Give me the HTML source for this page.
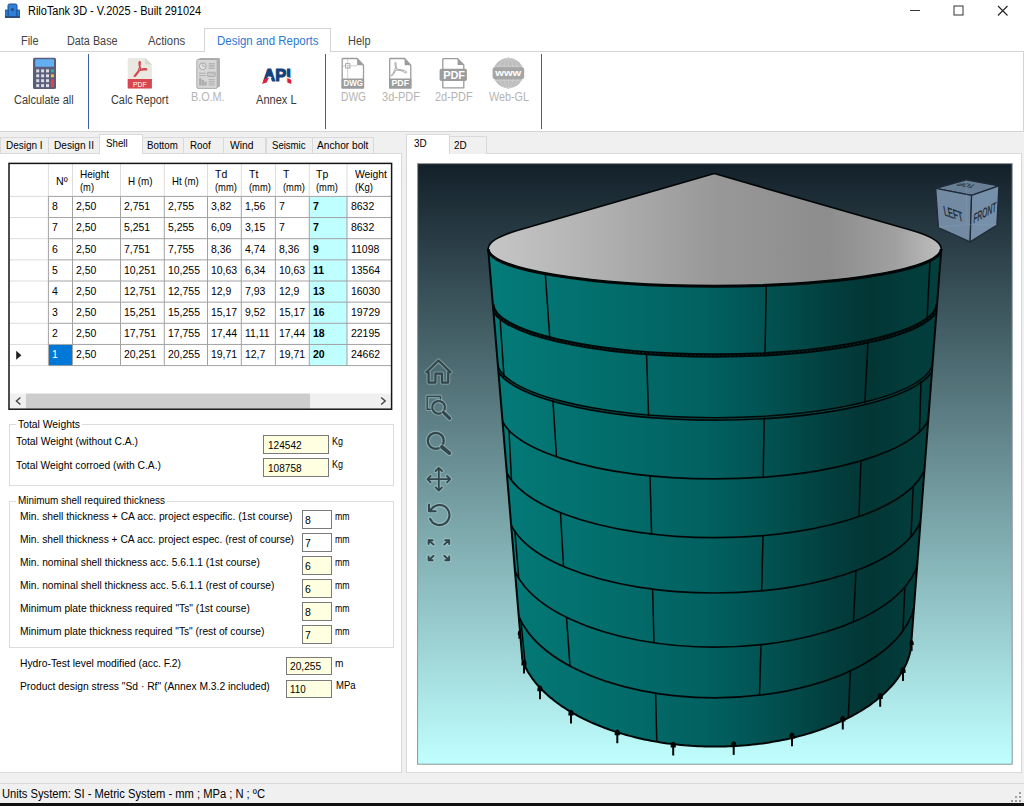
<!DOCTYPE html>
<html lang="en"><head><meta charset="utf-8"><title>RiloTank 3D - V.2025 - Built 291024</title>
<style>
html,body{margin:0;padding:0}
body{width:1024px;height:806px;position:relative;overflow:hidden;background:#f0f0f0;font-family:"Liberation Sans",sans-serif;}
.a{position:absolute;box-sizing:border-box}
.t{position:absolute;white-space:nowrap;transform-origin:0 0}
svg{position:absolute;overflow:visible}
</style></head><body>

<div class="a" style="left:0px;top:0px;width:1024px;height:51px;background:#fff"></div>
<svg style="left:5px;top:3px" width="15" height="15" viewBox="0 0 15 15">
<rect x="3" y="1" width="9" height="13" rx="1.5" fill="#2f7fd6" stroke="#1c4f8f" stroke-width="1"/>
<rect x="0.5" y="7" width="2.5" height="7" fill="#2f7fd6" stroke="#1c4f8f" stroke-width="0.8"/>
<rect x="12" y="7" width="2.5" height="7" fill="#2f7fd6" stroke="#1c4f8f" stroke-width="0.8"/>
<rect x="6.3" y="5.5" width="2.2" height="2.2" fill="#123a6b"/>
<rect x="0" y="13.6" width="15" height="1.2" fill="#1c3557"/>
</svg>
<div class="t" style="left:28.3px;top:4.44px;font-size:12px;line-height:14px;color:#000;transform:scaleX(0.9131);">RiloTank 3D - V.2025 - Built 291024</div>
<svg style="left:900px;top:0" width="124" height="22" viewBox="900 0 124 22">
<path d="M910 10.5H920" stroke="#333" stroke-width="1" fill="none"/>
<rect x="954" y="6" width="9" height="9" stroke="#333" stroke-width="1" fill="none"/>
<path d="M998 6L1007.5 15.5M1007.5 6L998 15.5" stroke="#222" stroke-width="1.1" fill="none"/>
</svg>
<div class="t" style="left:20.5px;top:33.74px;font-size:12px;line-height:14px;color:#444;transform:scaleX(0.9047);">File</div>
<div class="t" style="left:67.4px;top:33.74px;font-size:12px;line-height:14px;color:#444;transform:scaleX(0.9028);">Data Base</div>
<div class="t" style="left:148.4px;top:33.74px;font-size:12px;line-height:14px;color:#444;transform:scaleX(0.9426);">Actions</div>
<div class="t" style="left:347.5px;top:33.74px;font-size:12px;line-height:14px;color:#444;transform:scaleX(0.9114);">Help</div>
<div class="a" style="left:0px;top:51px;width:1024px;height:81px;background:#fff;border:1px solid #d4d4d4;border-left:none"></div>
<div class="a" style="left:204px;top:28px;width:127px;height:24px;background:#fff;border:1px solid #d4d4d4;border-bottom:none"></div>
<div class="t" style="left:216.6px;top:33.74px;font-size:12px;line-height:14px;color:#2b79d2;transform:scaleX(0.9560);">Design and Reports</div>
<div class="a" style="left:88px;top:54px;width:1px;height:75px;background:#3a5fa8"></div>
<div class="a" style="left:325px;top:54px;width:1px;height:75px;background:#3a5fa8"></div>
<div class="a" style="left:541px;top:54px;width:1px;height:75px;background:#3a5fa8"></div>
<div class="t" style="left:13.8px;top:92.84px;font-size:12px;line-height:14px;color:#3a3a3a;transform:scaleX(0.9124);">Calculate all</div>
<div class="t" style="left:111.2px;top:92.84px;font-size:12px;line-height:14px;color:#3a3a3a;transform:scaleX(0.9075);">Calc Report</div>
<div class="t" style="left:191.4px;top:89.84px;font-size:12px;line-height:14px;color:#b4b4b4;transform:scaleX(0.8997);">B.O.M.</div>
<div class="t" style="left:255.8px;top:92.84px;font-size:12px;line-height:14px;color:#3a3a3a;transform:scaleX(0.9217);">Annex L</div>
<div class="t" style="left:341.0px;top:89.84px;font-size:12px;line-height:14px;color:#b4b4b4;transform:scaleX(0.8524);">DWG</div>
<div class="t" style="left:382.0px;top:89.84px;font-size:12px;line-height:14px;color:#b4b4b4;transform:scaleX(0.9191);">3d-PDF</div>
<div class="t" style="left:435.3px;top:89.84px;font-size:12px;line-height:14px;color:#b4b4b4;transform:scaleX(0.9119);">2d-PDF</div>
<div class="t" style="left:488.7px;top:89.84px;font-size:12px;line-height:14px;color:#b4b4b4;transform:scaleX(0.8973);">Web-GL</div>
<svg style="left:0;top:0" width="1024" height="135" viewBox="0 0 1024 135"><rect x="33" y="57.7" width="23" height="31.3" rx="1.6" fill="#5a5e7b"/><rect x="35.2" y="59.3" width="18.8" height="7.4" rx="0.6" fill="#62b0f2"/><rect x="36.2" y="69.4" width="3" height="3" fill="#dcdce2"/><rect x="41.1" y="69.4" width="3" height="3" fill="#dcdce2"/><rect x="46.0" y="69.4" width="3" height="3" fill="#dcdce2"/><rect x="36.2" y="74.3" width="3" height="3" fill="#dcdce2"/><rect x="41.1" y="74.3" width="3" height="3" fill="#dcdce2"/><rect x="46.0" y="74.3" width="3" height="3" fill="#dcdce2"/><rect x="36.2" y="79.2" width="3" height="3" fill="#dcdce2"/><rect x="41.1" y="79.2" width="3" height="3" fill="#dcdce2"/><rect x="46.0" y="79.2" width="3" height="3" fill="#dcdce2"/><rect x="36.2" y="84.1" width="3" height="3" fill="#dcdce2"/><rect x="41.1" y="84.1" width="3" height="3" fill="#dcdce2"/><rect x="46.0" y="84.1" width="3" height="3" fill="#dcdce2"/><rect x="50.9" y="69.4" width="3" height="3" fill="#2bb5a0"/><rect x="50.9" y="74.3" width="3" height="3" fill="#f3c23c"/><rect x="50.9" y="79.2" width="3" height="7.9" fill="#e2434f"/><path d="M129 58.1H145.2L151.9 64.6V88.6H127.7V59.4Q127.7 58.1 129 58.1Z" fill="#e9e9e1"/><path d="M145.2 58.1L151.9 64.6H146.4Q145.2 64.6 145.2 63.4Z" fill="#d7d7cc"/><path d="M127.7 78.9H151.9V87.4Q151.9 88.6 150.7 88.6H128.9Q127.7 88.6 127.7 87.4Z" fill="#d8474f"/><path d="M139.6 61.6C138.6 61.8 139 64.8 139.7 67.2C139 70 136.6 73.8 134.6 75.4C133.6 76.2 134.4 76.9 135.4 76C137 74.4 138.4 72.2 139.3 70.6C141.2 70 143.6 69.6 145.6 69.9C147 70.1 147.2 69 145.9 68.7C144.2 68.4 142.2 68.7 140.6 69.2C140 67.6 139.6 65.8 140.2 63.2C140.5 62 140.2 61.5 139.6 61.6Z" fill="none" stroke="#d04850" stroke-width="1.3" stroke-linejoin="round"/><text x="139.8" y="86.5" font-family="Liberation Sans, sans-serif" font-size="7.2" fill="#fff" text-anchor="middle" textLength="13.6" lengthAdjust="spacingAndGlyphs">PDF</text><rect x="199.5" y="58.1" width="20.4" height="29" rx="1" fill="#a9a9a9"/><rect x="198" y="58.8" width="20.4" height="29.2" rx="1" fill="#b9b9b9"/><rect x="196.8" y="59.4" width="20.4" height="29" rx="1.2" fill="#d6d6d6" stroke="#a4a4a4" stroke-width="0.9"/><circle cx="202.8" cy="66.3" r="3.4" fill="#e4e4e4" stroke="#a4a4a4" stroke-width="0.9"/><path d="M202.8 63.4V66.3H205.6" fill="none" stroke="#a4a4a4" stroke-width="0.8"/><path d="M208.6 63.6H214.8M208.6 65.2H214.8M208.6 66.8H214.8M208.6 68.4H214.8" stroke="#a4a4a4" stroke-width="0.8"/><path d="M199 73.2H206M199 75.6H206" stroke="#a4a4a4" stroke-width="0.8"/><rect x="207.6" y="72.3" width="7.6" height="4.3" rx="0.6" fill="#c6c6c6" stroke="#a4a4a4" stroke-width="0.8"/><path d="M199.6 85.6V78.4H201V85.6M202.2 85.6V80.2H203.6V85.6M204.8 85.6V82H206.2V85.6" fill="#b4b4b4" stroke="#a4a4a4" stroke-width="0.7"/><path d="M208.6 79.6H214.8M208.6 81.4H214.8M208.6 83.2H214.8M208.6 85H214.8" stroke="#a4a4a4" stroke-width="0.8"/><text x="263.2" y="81.2" font-family="Liberation Sans, sans-serif" font-weight="bold" font-size="17.0" fill="#16417c" stroke="#16417c" stroke-width="1.1" stroke-linejoin="round" textLength="27.6" lengthAdjust="spacingAndGlyphs">API</text><path d="M267.6 76.4L269.6 71.2L271.6 76.4Z" fill="#16417c"/><path d="M260.5 86L268.6 76.3L271.6 77L268.4 86Z" fill="#fff"/><path d="M264.4 78.9L269 77.7L266.6 82.4L261.8 84Z" fill="#e01e3c"/><path d="M286.6 76.6L292 78.6V86H286.6Z" fill="#fff"/><path d="M287.3 77.9L291.2 79.7V84L287.3 82.4Z" fill="#e01e3c"/><path d="M343 58.5H357.1L363.5 65.2V87.9H342.2V59.3Q342.2 58.5 343 58.5Z" fill="#fff" stroke="#9c9c9c" stroke-width="1.3" stroke-linejoin="round"/><path d="M357.1 58.5L363.5 65.2H357.1Z" fill="#9c9c9c"/><path d="M347.7 59V78.6M343 65.9H357" stroke="#cfcfcf" stroke-width="1"/><rect x="345.6" y="63.7" width="4.3" height="4.3" fill="#fff" stroke="#9c9c9c" stroke-width="0.9"/><rect x="347.1" y="65.2" width="1.3" height="1.3" fill="#9c9c9c"/><rect x="341.6" y="78.6" width="22.5" height="9.9" rx="0.8" fill="#9c9c9c"/><text x="353.2" y="86.4" font-family="Liberation Sans, sans-serif" font-weight="bold" font-size="8.2" fill="#fff" text-anchor="middle" textLength="19.4" lengthAdjust="spacingAndGlyphs">DWG</text><path d="M390.4 58.5H404.6L410.8 65.2V87.9H389.7V59.3Q389.7 58.5 390.4 58.5Z" fill="#fff" stroke="#9c9c9c" stroke-width="1.3" stroke-linejoin="round"/><path d="M404.6 58.5L410.8 65.2H404.6Z" fill="#9c9c9c"/><path d="M395.4 62.4C394.6 62.6 395 65 395.6 67C394.8 69.8 393.2 73.4 391.6 75C390.8 75.8 391.6 76.4 392.4 75.6C393.8 74.2 394.8 72 395.6 70.4C397.6 69.8 402 70.2 404.8 72.6C406.2 73.6 407.6 72.6 406.2 71.4C404.4 70.2 399.6 69.4 396.8 69.2C396.2 67.6 395.8 65.8 396.2 63.8C396.4 62.8 396 62.3 395.4 62.4Z" fill="none" stroke="#9c9c9c" stroke-width="0.9" stroke-linejoin="round"/><rect x="389.1" y="78.6" width="22.3" height="9.9" rx="0.8" fill="#9c9c9c"/><text x="400.3" y="86.4" font-family="Liberation Sans, sans-serif" font-weight="bold" font-size="8.2" fill="#fff" text-anchor="middle" textLength="17.6" lengthAdjust="spacingAndGlyphs">PDF</text><path d="M443.6 58.7H457.6L463.8 65V87.8H442.8V59.5Q442.8 58.7 443.6 58.7Z" fill="#fff" stroke="#9c9c9c" stroke-width="1.3" stroke-linejoin="round"/><path d="M457.6 58.7L463.8 65H457.6Z" fill="#9c9c9c"/><rect x="439.6" y="68.8" width="27.3" height="12.1" rx="1.6" fill="#9c9c9c"/><text x="454.1" y="79.4" font-family="Liberation Sans, sans-serif" font-weight="bold" font-size="11.6" fill="#fff" text-anchor="middle" textLength="21.8" lengthAdjust="spacingAndGlyphs">PDF</text><circle cx="508.4" cy="73.1" r="15.2" fill="#bdbdbd"/><g fill="none" stroke="#cfcfcf" stroke-width="0.8"><ellipse cx="508.4" cy="73.1" rx="5" ry="15.2"/><ellipse cx="508.4" cy="73.1" rx="10.4" ry="15.2"/><path d="M508.4 57.9V88.3M494.6 66H522.2M494.6 80.4H522.2"/></g><rect x="492.6" y="67.2" width="31.6" height="12" rx="2.4" fill="#a6a6a6"/><text x="508.3" y="75.6" font-family="Liberation Sans, sans-serif" font-weight="bold" font-size="9.4" fill="#fff" text-anchor="middle" textLength="26" lengthAdjust="spacingAndGlyphs">www</text></svg>
<div class="a" style="left:0px;top:153px;width:402px;height:620px;background:#fff;border:1px solid #d9d9d9;border-left:none"></div>
<div class="a" style="left:0px;top:136.5px;width:48.5px;height:17.5px;background:#f0f0f0;border:1px solid #d9d9d9;border-bottom:none"></div>
<div class="t" style="left:5.5px;top:138.69px;font-size:11px;line-height:13px;color:#000;transform:scaleX(0.9044);">Design I</div>
<div class="a" style="left:47.5px;top:136.5px;width:52.5px;height:17.5px;background:#f0f0f0;border:1px solid #d9d9d9;border-bottom:none"></div>
<div class="t" style="left:54.3px;top:138.69px;font-size:11px;line-height:13px;color:#000;transform:scaleX(0.9212);">Design II</div>
<div class="a" style="left:142px;top:136.5px;width:42.19999999999999px;height:17.5px;background:#f0f0f0;border:1px solid #d9d9d9;border-bottom:none"></div>
<div class="t" style="left:146.9px;top:138.69px;font-size:11px;line-height:13px;color:#000;transform:scaleX(0.8835);">Bottom</div>
<div class="a" style="left:183.2px;top:136.5px;width:41.20000000000002px;height:17.5px;background:#f0f0f0;border:1px solid #d9d9d9;border-bottom:none"></div>
<div class="t" style="left:190.2px;top:138.69px;font-size:11px;line-height:13px;color:#000;transform:scaleX(0.8946);">Roof</div>
<div class="a" style="left:223.4px;top:136.5px;width:43.099999999999994px;height:17.5px;background:#f0f0f0;border:1px solid #d9d9d9;border-bottom:none"></div>
<div class="t" style="left:230.2px;top:138.69px;font-size:11px;line-height:13px;color:#000;transform:scaleX(0.9416);">Wind</div>
<div class="a" style="left:265.5px;top:136.5px;width:47.0px;height:17.5px;background:#f0f0f0;border:1px solid #d9d9d9;border-bottom:none"></div>
<div class="t" style="left:271.5px;top:138.69px;font-size:11px;line-height:13px;color:#000;transform:scaleX(0.8698);">Seismic</div>
<div class="a" style="left:311.5px;top:136.5px;width:62.69999999999999px;height:17.5px;background:#f0f0f0;border:1px solid #d9d9d9;border-bottom:none"></div>
<div class="t" style="left:317.0px;top:138.69px;font-size:11px;line-height:13px;color:#000;transform:scaleX(0.9235);">Anchor bolt</div>
<div class="a" style="left:0px;top:153px;width:402px;height:1px;background:#d9d9d9"></div>
<div class="a" style="left:98.6px;top:134.3px;width:44px;height:20px;background:#fff;border:1px solid #d9d9d9;border-bottom:none"></div>
<div class="t" style="left:106.4px;top:136.79px;font-size:11px;line-height:13px;color:#000;transform:scaleX(0.8828);">Shell</div>
<div class="a" style="left:9.5px;top:164px;width:382px;height:245px;background:#fff"></div>
<div class="a" style="left:309.8px;top:196.9px;width:37.2px;height:168.70000000000002px;background:#c0ffff"></div>
<div class="a" style="left:48.9px;top:344.95px;width:23.6px;height:20.65px;background:#0078d7"></div>
<svg style="left:0;top:0" width="410" height="420" viewBox="0 0 410 420"><path d="M48.4 164V196.4" stroke="#dcdcdc" stroke-width="1"/><path d="M72.5 164V196.4" stroke="#dcdcdc" stroke-width="1"/><path d="M120.5 164V196.4" stroke="#dcdcdc" stroke-width="1"/><path d="M164.3 164V196.4" stroke="#dcdcdc" stroke-width="1"/><path d="M207.5 164V196.4" stroke="#dcdcdc" stroke-width="1"/><path d="M241.3 164V196.4" stroke="#dcdcdc" stroke-width="1"/><path d="M275.4 164V196.4" stroke="#dcdcdc" stroke-width="1"/><path d="M309.3 164V196.4" stroke="#dcdcdc" stroke-width="1"/><path d="M347 164V196.4" stroke="#dcdcdc" stroke-width="1"/><path d="M9.5 196.4H48.4" stroke="#dcdcdc" stroke-width="1"/><path d="M48.4 196.4H391" stroke="#a2a2a2" stroke-width="1"/><path d="M48.4 196.4V365.6" stroke="#a2a2a2" stroke-width="1"/><path d="M72.5 196.4V365.6" stroke="#a2a2a2" stroke-width="1"/><path d="M120.5 196.4V365.6" stroke="#a2a2a2" stroke-width="1"/><path d="M164.3 196.4V365.6" stroke="#a2a2a2" stroke-width="1"/><path d="M207.5 196.4V365.6" stroke="#a2a2a2" stroke-width="1"/><path d="M241.3 196.4V365.6" stroke="#a2a2a2" stroke-width="1"/><path d="M275.4 196.4V365.6" stroke="#a2a2a2" stroke-width="1"/><path d="M309.3 196.4V365.6" stroke="#a2a2a2" stroke-width="1"/><path d="M347 196.4V365.6" stroke="#a2a2a2" stroke-width="1"/><path d="M9.5 217.55H48.4" stroke="#dcdcdc" stroke-width="1"/><path d="M48.4 217.55H391" stroke="#a2a2a2" stroke-width="1"/><path d="M9.5 238.70H48.4" stroke="#dcdcdc" stroke-width="1"/><path d="M48.4 238.70H391" stroke="#a2a2a2" stroke-width="1"/><path d="M9.5 259.85H48.4" stroke="#dcdcdc" stroke-width="1"/><path d="M48.4 259.85H391" stroke="#a2a2a2" stroke-width="1"/><path d="M9.5 281.00H48.4" stroke="#dcdcdc" stroke-width="1"/><path d="M48.4 281.00H391" stroke="#a2a2a2" stroke-width="1"/><path d="M9.5 302.15H48.4" stroke="#dcdcdc" stroke-width="1"/><path d="M48.4 302.15H391" stroke="#a2a2a2" stroke-width="1"/><path d="M9.5 323.30H48.4" stroke="#dcdcdc" stroke-width="1"/><path d="M48.4 323.30H391" stroke="#a2a2a2" stroke-width="1"/><path d="M9.5 344.45H48.4" stroke="#dcdcdc" stroke-width="1"/><path d="M48.4 344.45H391" stroke="#a2a2a2" stroke-width="1"/><path d="M9.5 365.60H48.4" stroke="#dcdcdc" stroke-width="1"/><path d="M48.4 365.60H391" stroke="#a2a2a2" stroke-width="1"/><path d="M16.2 350.62499999999994L21.4 355.22499999999997L16.2 359.825Z" fill="#222"/><rect x="9.8" y="393.6" width="381.4" height="15" fill="#f0f0f0"/><rect x="26" y="393.6" width="284" height="15" fill="#cdcdcd"/><path d="M20.4 397.4L16.4 401L20.4 404.6" fill="none" stroke="#444" stroke-width="1.4"/><path d="M381.2 397.4L385.2 401L381.2 404.6" fill="none" stroke="#444" stroke-width="1.4"/><rect x="9" y="163.4" width="382.6" height="245.79999999999998" fill="none" stroke="#151515" stroke-width="1.5"/></svg>
<div class="t" style="left:56.4px;top:174.69px;font-size:11px;line-height:13px;color:#000;transform:scaleX(0.9692);">Nº</div>
<div class="t" style="left:80.0px;top:168.29px;font-size:11px;line-height:13px;color:#000;transform:scaleX(0.9120);">Height</div>
<div class="t" style="left:80.0px;top:180.89px;font-size:11px;line-height:13px;color:#000;transform:scaleX(0.8485);">(m)</div>
<div class="t" style="left:128.0px;top:174.69px;font-size:11px;line-height:13px;color:#000;transform:scaleX(0.8945);">H (m)</div>
<div class="t" style="left:171.6px;top:174.69px;font-size:11px;line-height:13px;color:#000;transform:scaleX(0.8773);">Ht (m)</div>
<div class="t" style="left:215.4px;top:168.29px;font-size:11px;line-height:13px;color:#000;transform:scaleX(0.95);">Td</div>
<div class="t" style="left:215.0px;top:180.89px;font-size:11px;line-height:13px;color:#000;transform:scaleX(0.8497);">(mm)</div>
<div class="t" style="left:249.0px;top:168.29px;font-size:11px;line-height:13px;color:#000;transform:scaleX(0.95);">Tt</div>
<div class="t" style="left:248.6px;top:180.89px;font-size:11px;line-height:13px;color:#000;transform:scaleX(0.8497);">(mm)</div>
<div class="t" style="left:283.0px;top:168.29px;font-size:11px;line-height:13px;color:#000;transform:scaleX(0.95);">T</div>
<div class="t" style="left:282.6px;top:180.89px;font-size:11px;line-height:13px;color:#000;transform:scaleX(0.8497);">(mm)</div>
<div class="t" style="left:316.4px;top:168.29px;font-size:11px;line-height:13px;color:#000;transform:scaleX(0.95);">Tp</div>
<div class="t" style="left:316.0px;top:180.89px;font-size:11px;line-height:13px;color:#000;transform:scaleX(0.8497);">(mm)</div>
<div class="t" style="left:355.0px;top:168.29px;font-size:11px;line-height:13px;color:#000;transform:scaleX(0.9399);">Weight</div>
<div class="t" style="left:355.0px;top:180.89px;font-size:11px;line-height:13px;color:#000;transform:scaleX(0.8662);">(Kg)</div>
<div class="t" style="left:52.3px;top:200.29px;font-size:11px;line-height:13px;color:#000;transform:scaleX(0.95);">8</div>
<div class="t" style="left:75.6px;top:200.29px;font-size:11px;line-height:13px;color:#000;transform:scaleX(0.95);">2,50</div>
<div class="t" style="left:124.3px;top:200.29px;font-size:11px;line-height:13px;color:#000;transform:scaleX(0.95);">2,751</div>
<div class="t" style="left:167.6px;top:200.29px;font-size:11px;line-height:13px;color:#000;transform:scaleX(0.95);">2,755</div>
<div class="t" style="left:211.4px;top:200.29px;font-size:11px;line-height:13px;color:#000;transform:scaleX(0.95);">3,82</div>
<div class="t" style="left:245.4px;top:200.29px;font-size:11px;line-height:13px;color:#000;transform:scaleX(0.95);">1,56</div>
<div class="t" style="left:279.4px;top:200.29px;font-size:11px;line-height:13px;color:#000;transform:scaleX(0.95);">7</div>
<div class="t" style="left:313.2px;top:200.29px;font-size:11px;line-height:13px;color:#000;font-weight:bold;transform:scaleX(0.95);">7</div>
<div class="t" style="left:351.0px;top:200.29px;font-size:11px;line-height:13px;color:#000;transform:scaleX(0.95);">8632</div>
<div class="t" style="left:52.3px;top:221.44px;font-size:11px;line-height:13px;color:#000;transform:scaleX(0.95);">7</div>
<div class="t" style="left:75.6px;top:221.44px;font-size:11px;line-height:13px;color:#000;transform:scaleX(0.95);">2,50</div>
<div class="t" style="left:124.3px;top:221.44px;font-size:11px;line-height:13px;color:#000;transform:scaleX(0.95);">5,251</div>
<div class="t" style="left:167.6px;top:221.44px;font-size:11px;line-height:13px;color:#000;transform:scaleX(0.95);">5,255</div>
<div class="t" style="left:211.4px;top:221.44px;font-size:11px;line-height:13px;color:#000;transform:scaleX(0.95);">6,09</div>
<div class="t" style="left:245.4px;top:221.44px;font-size:11px;line-height:13px;color:#000;transform:scaleX(0.95);">3,15</div>
<div class="t" style="left:279.4px;top:221.44px;font-size:11px;line-height:13px;color:#000;transform:scaleX(0.95);">7</div>
<div class="t" style="left:313.2px;top:221.44px;font-size:11px;line-height:13px;color:#000;font-weight:bold;transform:scaleX(0.95);">7</div>
<div class="t" style="left:351.0px;top:221.44px;font-size:11px;line-height:13px;color:#000;transform:scaleX(0.95);">8632</div>
<div class="t" style="left:52.3px;top:242.59px;font-size:11px;line-height:13px;color:#000;transform:scaleX(0.95);">6</div>
<div class="t" style="left:75.6px;top:242.59px;font-size:11px;line-height:13px;color:#000;transform:scaleX(0.95);">2,50</div>
<div class="t" style="left:124.3px;top:242.59px;font-size:11px;line-height:13px;color:#000;transform:scaleX(0.95);">7,751</div>
<div class="t" style="left:167.6px;top:242.59px;font-size:11px;line-height:13px;color:#000;transform:scaleX(0.95);">7,755</div>
<div class="t" style="left:211.4px;top:242.59px;font-size:11px;line-height:13px;color:#000;transform:scaleX(0.95);">8,36</div>
<div class="t" style="left:245.4px;top:242.59px;font-size:11px;line-height:13px;color:#000;transform:scaleX(0.95);">4,74</div>
<div class="t" style="left:279.4px;top:242.59px;font-size:11px;line-height:13px;color:#000;transform:scaleX(0.95);">8,36</div>
<div class="t" style="left:313.2px;top:242.59px;font-size:11px;line-height:13px;color:#000;font-weight:bold;transform:scaleX(0.95);">9</div>
<div class="t" style="left:351.0px;top:242.59px;font-size:11px;line-height:13px;color:#000;transform:scaleX(0.95);">11098</div>
<div class="t" style="left:52.3px;top:263.74px;font-size:11px;line-height:13px;color:#000;transform:scaleX(0.95);">5</div>
<div class="t" style="left:75.6px;top:263.74px;font-size:11px;line-height:13px;color:#000;transform:scaleX(0.95);">2,50</div>
<div class="t" style="left:124.3px;top:263.74px;font-size:11px;line-height:13px;color:#000;transform:scaleX(0.95);">10,251</div>
<div class="t" style="left:167.6px;top:263.74px;font-size:11px;line-height:13px;color:#000;transform:scaleX(0.95);">10,255</div>
<div class="t" style="left:211.4px;top:263.74px;font-size:11px;line-height:13px;color:#000;transform:scaleX(0.95);">10,63</div>
<div class="t" style="left:245.4px;top:263.74px;font-size:11px;line-height:13px;color:#000;transform:scaleX(0.95);">6,34</div>
<div class="t" style="left:279.4px;top:263.74px;font-size:11px;line-height:13px;color:#000;transform:scaleX(0.95);">10,63</div>
<div class="t" style="left:313.2px;top:263.74px;font-size:11px;line-height:13px;color:#000;font-weight:bold;transform:scaleX(0.95);">11</div>
<div class="t" style="left:351.0px;top:263.74px;font-size:11px;line-height:13px;color:#000;transform:scaleX(0.95);">13564</div>
<div class="t" style="left:52.3px;top:284.89px;font-size:11px;line-height:13px;color:#000;transform:scaleX(0.95);">4</div>
<div class="t" style="left:75.6px;top:284.89px;font-size:11px;line-height:13px;color:#000;transform:scaleX(0.95);">2,50</div>
<div class="t" style="left:124.3px;top:284.89px;font-size:11px;line-height:13px;color:#000;transform:scaleX(0.95);">12,751</div>
<div class="t" style="left:167.6px;top:284.89px;font-size:11px;line-height:13px;color:#000;transform:scaleX(0.95);">12,755</div>
<div class="t" style="left:211.4px;top:284.89px;font-size:11px;line-height:13px;color:#000;transform:scaleX(0.95);">12,9</div>
<div class="t" style="left:245.4px;top:284.89px;font-size:11px;line-height:13px;color:#000;transform:scaleX(0.95);">7,93</div>
<div class="t" style="left:279.4px;top:284.89px;font-size:11px;line-height:13px;color:#000;transform:scaleX(0.95);">12,9</div>
<div class="t" style="left:313.2px;top:284.89px;font-size:11px;line-height:13px;color:#000;font-weight:bold;transform:scaleX(0.95);">13</div>
<div class="t" style="left:351.0px;top:284.89px;font-size:11px;line-height:13px;color:#000;transform:scaleX(0.95);">16030</div>
<div class="t" style="left:52.3px;top:306.04px;font-size:11px;line-height:13px;color:#000;transform:scaleX(0.95);">3</div>
<div class="t" style="left:75.6px;top:306.04px;font-size:11px;line-height:13px;color:#000;transform:scaleX(0.95);">2,50</div>
<div class="t" style="left:124.3px;top:306.04px;font-size:11px;line-height:13px;color:#000;transform:scaleX(0.95);">15,251</div>
<div class="t" style="left:167.6px;top:306.04px;font-size:11px;line-height:13px;color:#000;transform:scaleX(0.95);">15,255</div>
<div class="t" style="left:211.4px;top:306.04px;font-size:11px;line-height:13px;color:#000;transform:scaleX(0.95);">15,17</div>
<div class="t" style="left:245.4px;top:306.04px;font-size:11px;line-height:13px;color:#000;transform:scaleX(0.95);">9,52</div>
<div class="t" style="left:279.4px;top:306.04px;font-size:11px;line-height:13px;color:#000;transform:scaleX(0.95);">15,17</div>
<div class="t" style="left:313.2px;top:306.04px;font-size:11px;line-height:13px;color:#000;font-weight:bold;transform:scaleX(0.95);">16</div>
<div class="t" style="left:351.0px;top:306.04px;font-size:11px;line-height:13px;color:#000;transform:scaleX(0.95);">19729</div>
<div class="t" style="left:52.3px;top:327.19px;font-size:11px;line-height:13px;color:#000;transform:scaleX(0.95);">2</div>
<div class="t" style="left:75.6px;top:327.19px;font-size:11px;line-height:13px;color:#000;transform:scaleX(0.95);">2,50</div>
<div class="t" style="left:124.3px;top:327.19px;font-size:11px;line-height:13px;color:#000;transform:scaleX(0.95);">17,751</div>
<div class="t" style="left:167.6px;top:327.19px;font-size:11px;line-height:13px;color:#000;transform:scaleX(0.95);">17,755</div>
<div class="t" style="left:211.4px;top:327.19px;font-size:11px;line-height:13px;color:#000;transform:scaleX(0.95);">17,44</div>
<div class="t" style="left:245.4px;top:327.19px;font-size:11px;line-height:13px;color:#000;transform:scaleX(0.95);">11,11</div>
<div class="t" style="left:279.4px;top:327.19px;font-size:11px;line-height:13px;color:#000;transform:scaleX(0.95);">17,44</div>
<div class="t" style="left:313.2px;top:327.19px;font-size:11px;line-height:13px;color:#000;font-weight:bold;transform:scaleX(0.95);">18</div>
<div class="t" style="left:351.0px;top:327.19px;font-size:11px;line-height:13px;color:#000;transform:scaleX(0.95);">22195</div>
<div class="t" style="left:52.3px;top:348.34px;font-size:11px;line-height:13px;color:#fff;transform:scaleX(0.95);">1</div>
<div class="t" style="left:75.6px;top:348.34px;font-size:11px;line-height:13px;color:#000;transform:scaleX(0.95);">2,50</div>
<div class="t" style="left:124.3px;top:348.34px;font-size:11px;line-height:13px;color:#000;transform:scaleX(0.95);">20,251</div>
<div class="t" style="left:167.6px;top:348.34px;font-size:11px;line-height:13px;color:#000;transform:scaleX(0.95);">20,255</div>
<div class="t" style="left:211.4px;top:348.34px;font-size:11px;line-height:13px;color:#000;transform:scaleX(0.95);">19,71</div>
<div class="t" style="left:245.4px;top:348.34px;font-size:11px;line-height:13px;color:#000;transform:scaleX(0.95);">12,7</div>
<div class="t" style="left:279.4px;top:348.34px;font-size:11px;line-height:13px;color:#000;transform:scaleX(0.95);">19,71</div>
<div class="t" style="left:313.2px;top:348.34px;font-size:11px;line-height:13px;color:#000;font-weight:bold;transform:scaleX(0.95);">20</div>
<div class="t" style="left:351.0px;top:348.34px;font-size:11px;line-height:13px;color:#000;transform:scaleX(0.95);">24662</div>
<div class="a" style="left:9px;top:423.5px;width:385px;height:62.5px;border:1px solid #dcdcdc;background:#fff"></div>
<div class="a" style="left:16px;top:417px;width:66px;height:12px;background:#fff"></div>
<div class="t" style="left:18.0px;top:417.69px;font-size:11px;line-height:13px;color:#000;transform:scaleX(0.9418);">Total Weights</div>
<div class="t" style="left:16.0px;top:435.29px;font-size:11px;line-height:13px;color:#000;transform:scaleX(0.9383);">Total Weight (without C.A.)</div>
<div class="t" style="left:16.0px;top:458.69px;font-size:11px;line-height:13px;color:#000;transform:scaleX(0.9350);">Total Weight corroed (with C.A.)</div>
<div class="a" style="left:263px;top:435px;width:65.8px;height:18.8px;background:#ffffe1;border:1px solid #7a7a7a"></div>
<div class="t" style="left:268.0px;top:438.89px;font-size:11px;line-height:13px;color:#000;transform:scaleX(0.9151);">124542</div>
<div class="a" style="left:263px;top:458px;width:65.8px;height:18.8px;background:#ffffe1;border:1px solid #7a7a7a"></div>
<div class="t" style="left:268.0px;top:461.89px;font-size:11px;line-height:13px;color:#000;transform:scaleX(0.9151);">108758</div>
<div class="t" style="left:332.0px;top:434.69px;font-size:11px;line-height:13px;color:#000;transform:scaleX(0.8167);">Kg</div>
<div class="t" style="left:332.0px;top:457.69px;font-size:11px;line-height:13px;color:#000;transform:scaleX(0.8167);">Kg</div>
<div class="a" style="left:9px;top:501px;width:385px;height:147px;border:1px solid #dcdcdc;background:#fff"></div>
<div class="a" style="left:16px;top:495px;width:151px;height:12px;background:#fff"></div>
<div class="t" style="left:18.0px;top:494.29px;font-size:11px;line-height:13px;color:#000;transform:scaleX(0.9039);">Minimum shell required thickness</div>
<div class="t" style="left:19.6px;top:510.29px;font-size:11px;line-height:13px;color:#000;transform:scaleX(0.9331);">Min. shell thickness + CA acc. project especific. (1st course)</div>
<div class="a" style="left:301.6px;top:510.0px;width:30.8px;height:18.8px;background:#fff;border:1px solid #7a7a7a"></div>
<div class="t" style="left:305.2px;top:513.89px;font-size:11px;line-height:13px;color:#000;transform:scaleX(0.95);">8</div>
<div class="t" style="left:335.0px;top:510.29px;font-size:11px;line-height:13px;color:#000;transform:scaleX(0.7966);">mm</div>
<div class="t" style="left:19.6px;top:533.29px;font-size:11px;line-height:13px;color:#000;transform:scaleX(0.9308);">Min. shell thickness + CA acc. project espec. (rest of course)</div>
<div class="a" style="left:301.6px;top:533.05px;width:30.8px;height:18.8px;background:#fff;border:1px solid #7a7a7a"></div>
<div class="t" style="left:305.2px;top:536.94px;font-size:11px;line-height:13px;color:#000;transform:scaleX(0.95);">7</div>
<div class="t" style="left:335.0px;top:533.29px;font-size:11px;line-height:13px;color:#000;transform:scaleX(0.7966);">mm</div>
<div class="t" style="left:19.6px;top:556.29px;font-size:11px;line-height:13px;color:#000;transform:scaleX(0.9294);">Min. nominal shell thickness acc. 5.6.1.1 (1st course)</div>
<div class="a" style="left:301.6px;top:556.1px;width:30.8px;height:18.8px;background:#ffffe1;border:1px solid #7a7a7a"></div>
<div class="t" style="left:305.2px;top:559.99px;font-size:11px;line-height:13px;color:#000;transform:scaleX(0.95);">6</div>
<div class="t" style="left:335.0px;top:556.29px;font-size:11px;line-height:13px;color:#000;transform:scaleX(0.7966);">mm</div>
<div class="t" style="left:19.6px;top:579.29px;font-size:11px;line-height:13px;color:#000;transform:scaleX(0.9288);">Min. nominal shell thickness acc. 5.6.1.1 (rest of course)</div>
<div class="a" style="left:301.6px;top:579.15px;width:30.8px;height:18.8px;background:#ffffe1;border:1px solid #7a7a7a"></div>
<div class="t" style="left:305.2px;top:583.04px;font-size:11px;line-height:13px;color:#000;transform:scaleX(0.95);">6</div>
<div class="t" style="left:335.0px;top:579.29px;font-size:11px;line-height:13px;color:#000;transform:scaleX(0.7966);">mm</div>
<div class="t" style="left:19.6px;top:602.29px;font-size:11px;line-height:13px;color:#000;transform:scaleX(0.9310);">Minimum plate thickness required &quot;Ts&quot; (1st course)</div>
<div class="a" style="left:301.6px;top:602.2px;width:30.8px;height:18.8px;background:#ffffe1;border:1px solid #7a7a7a"></div>
<div class="t" style="left:305.2px;top:606.09px;font-size:11px;line-height:13px;color:#000;transform:scaleX(0.95);">8</div>
<div class="t" style="left:335.0px;top:602.29px;font-size:11px;line-height:13px;color:#000;transform:scaleX(0.7966);">mm</div>
<div class="t" style="left:19.6px;top:625.29px;font-size:11px;line-height:13px;color:#000;transform:scaleX(0.9302);">Minimum plate thickness required &quot;Ts&quot; (rest of course)</div>
<div class="a" style="left:301.6px;top:625.25px;width:30.8px;height:18.8px;background:#ffffe1;border:1px solid #7a7a7a"></div>
<div class="t" style="left:305.2px;top:629.14px;font-size:11px;line-height:13px;color:#000;transform:scaleX(0.95);">7</div>
<div class="t" style="left:335.0px;top:625.29px;font-size:11px;line-height:13px;color:#000;transform:scaleX(0.7966);">mm</div>
<div class="t" style="left:19.6px;top:656.99px;font-size:11px;line-height:13px;color:#000;transform:scaleX(0.9372);">Hydro-Test level modified (acc. F.2)</div>
<div class="t" style="left:19.6px;top:680.19px;font-size:11px;line-height:13px;color:#000;transform:scaleX(0.9354);">Product design stress &quot;Sd · Rf&quot; (Annex M.3.2 included)</div>
<div class="a" style="left:286px;top:656.6px;width:46.4px;height:18.8px;background:#ffffe1;border:1px solid #7a7a7a"></div>
<div class="t" style="left:290.4px;top:660.49px;font-size:11px;line-height:13px;color:#000;transform:scaleX(0.9270);">20,255</div>
<div class="a" style="left:286px;top:679.6px;width:46.4px;height:18.8px;background:#ffffe1;border:1px solid #7a7a7a"></div>
<div class="t" style="left:290.4px;top:683.49px;font-size:11px;line-height:13px;color:#000;transform:scaleX(0.8890);">110</div>
<div class="t" style="left:335.0px;top:656.69px;font-size:11px;line-height:13px;color:#000;transform:scaleX(0.9158);">m</div>
<div class="t" style="left:336.0px;top:679.09px;font-size:11px;line-height:13px;color:#000;transform:scaleX(0.8663);">MPa</div>
<div class="a" style="left:405.8px;top:153px;width:616.2px;height:620px;background:#fff;border:1px solid #d9d9d9"></div>
<div class="a" style="left:449px;top:136.2px;width:38.2px;height:17.6px;background:#f0f0f0;border:1px solid #d9d9d9;border-bottom:none"></div>
<div class="t" style="left:454.4px;top:139.09px;font-size:11px;line-height:13px;color:#000;transform:scaleX(0.8960);">2D</div>
<div class="a" style="left:406px;top:134.4px;width:44px;height:20px;background:#fff;border:1px solid #d9d9d9;border-bottom:none"></div>
<div class="t" style="left:414.0px;top:137.09px;font-size:11px;line-height:13px;color:#000;transform:scaleX(0.8960);">3D</div>
<svg style="left:0;top:0" width="1024" height="806" viewBox="0 0 1024 806"><defs>
<linearGradient id="bg" x1="0" y1="163.6" x2="0" y2="764" gradientUnits="userSpaceOnUse">
<stop offset="0" stop-color="#13202a"/><stop offset="1" stop-color="#c0ffff"/></linearGradient>
<linearGradient id="body" x1="488" y1="0" x2="941" y2="0" gradientUnits="userSpaceOnUse">
<stop offset="0" stop-color="#047c7a"/><stop offset="0.14" stop-color="#037472"/><stop offset="0.3" stop-color="#026c6a"/>
<stop offset="0.49" stop-color="#026060"/><stop offset="0.6" stop-color="#025454"/><stop offset="0.69" stop-color="#024848"/><stop offset="0.777" stop-color="#023c3b"/>
<stop offset="0.845" stop-color="#023635"/><stop offset="0.91" stop-color="#023b3a"/><stop offset="1" stop-color="#033f3e"/></linearGradient>
<linearGradient id="roof" x1="488" y1="0" x2="941" y2="0" gradientUnits="userSpaceOnUse">
<stop offset="0" stop-color="#c6c6c6"/><stop offset="0.25" stop-color="#b0b0b0"/><stop offset="0.5" stop-color="#989898"/>
<stop offset="0.75" stop-color="#8d8d8d"/><stop offset="0.9" stop-color="#a0a0a0"/><stop offset="1" stop-color="#bebebe"/></linearGradient>
</defs><rect x="417.6" y="163.6" width="594.6" height="600.6" fill="url(#bg)"/><clipPath id="cb"><polygon points="487.9,245.0 522.4,660.4 523.1,662.3 523.9,664.1 524.8,666.0 525.7,667.8 526.7,669.6 527.7,671.4 528.8,673.2 530.0,675.0 531.2,676.8 532.4,678.6 533.8,680.3 535.1,682.1 536.5,683.8 538.0,685.5 539.6,687.2 541.1,688.9 542.8,690.5 544.5,692.2 546.2,693.8 548.0,695.5 549.9,697.1 551.8,698.6 553.7,700.2 555.7,701.8 557.7,703.3 559.8,704.8 562.0,706.3 564.2,707.7 566.4,709.2 568.7,710.6 571.0,712.0 573.4,713.4 575.8,714.7 578.2,716.1 580.7,717.4 583.2,718.7 585.8,719.9 588.4,721.1 591.1,722.4 593.8,723.5 596.5,724.7 599.3,725.8 602.1,726.9 604.9,728.0 607.8,729.0 610.7,730.1 613.6,731.1 616.5,732.0 619.5,733.0 622.6,733.9 625.6,734.7 628.7,735.6 631.8,736.4 634.9,737.2 638.1,738.0 641.2,738.7 644.4,739.4 647.7,740.0 650.9,740.7 654.2,741.3 657.4,741.8 660.7,742.4 664.0,742.9 667.4,743.4 670.7,743.8 674.1,744.2 677.4,744.6 680.8,744.9 684.2,745.3 687.6,745.5 691.0,745.8 694.4,746.0 697.8,746.2 701.3,746.3 704.7,746.5 708.1,746.5 711.6,746.6 715.0,746.6 718.4,746.6 721.9,746.5 725.3,746.5 728.7,746.3 732.2,746.2 735.6,746.0 739.0,745.8 742.4,745.5 745.8,745.3 749.2,744.9 752.6,744.6 755.9,744.2 759.3,743.8 762.6,743.4 766.0,742.9 769.3,742.4 772.6,741.8 775.8,741.3 779.1,740.7 782.3,740.0 785.6,739.4 788.8,738.7 791.9,738.0 795.1,737.2 798.2,736.4 801.3,735.6 804.4,734.7 807.4,733.9 810.5,733.0 813.4,732.0 816.4,731.1 819.3,730.1 822.2,729.0 825.1,728.0 827.9,726.9 830.7,725.8 833.5,724.7 836.2,723.5 838.9,722.4 841.6,721.1 844.2,719.9 846.8,718.7 849.3,717.4 851.8,716.1 854.2,714.7 856.6,713.4 859.0,712.0 861.3,710.6 863.6,709.2 865.8,707.7 868.0,706.3 870.2,704.8 872.3,703.3 874.3,701.8 876.3,700.2 878.2,698.6 880.1,697.1 882.0,695.5 883.8,693.8 885.5,692.2 887.2,690.5 888.9,688.9 890.4,687.2 892.0,685.5 893.5,683.8 894.9,682.1 896.2,680.3 897.6,678.6 898.8,676.8 900.0,675.0 901.2,673.2 902.3,671.4 903.3,669.6 904.3,667.8 905.2,666.0 906.1,664.1 906.9,662.3 907.6,660.4 908.3,658.6 908.9,656.7 909.5,654.8 910.0,652.9 910.4,651.1 910.8,649.2 941.5,245.0"/></clipPath><polygon points="487.9,245.0 522.4,660.4 523.1,662.3 523.9,664.1 524.8,666.0 525.7,667.8 526.7,669.6 527.7,671.4 528.8,673.2 530.0,675.0 531.2,676.8 532.4,678.6 533.8,680.3 535.1,682.1 536.5,683.8 538.0,685.5 539.6,687.2 541.1,688.9 542.8,690.5 544.5,692.2 546.2,693.8 548.0,695.5 549.9,697.1 551.8,698.6 553.7,700.2 555.7,701.8 557.7,703.3 559.8,704.8 562.0,706.3 564.2,707.7 566.4,709.2 568.7,710.6 571.0,712.0 573.4,713.4 575.8,714.7 578.2,716.1 580.7,717.4 583.2,718.7 585.8,719.9 588.4,721.1 591.1,722.4 593.8,723.5 596.5,724.7 599.3,725.8 602.1,726.9 604.9,728.0 607.8,729.0 610.7,730.1 613.6,731.1 616.5,732.0 619.5,733.0 622.6,733.9 625.6,734.7 628.7,735.6 631.8,736.4 634.9,737.2 638.1,738.0 641.2,738.7 644.4,739.4 647.7,740.0 650.9,740.7 654.2,741.3 657.4,741.8 660.7,742.4 664.0,742.9 667.4,743.4 670.7,743.8 674.1,744.2 677.4,744.6 680.8,744.9 684.2,745.3 687.6,745.5 691.0,745.8 694.4,746.0 697.8,746.2 701.3,746.3 704.7,746.5 708.1,746.5 711.6,746.6 715.0,746.6 718.4,746.6 721.9,746.5 725.3,746.5 728.7,746.3 732.2,746.2 735.6,746.0 739.0,745.8 742.4,745.5 745.8,745.3 749.2,744.9 752.6,744.6 755.9,744.2 759.3,743.8 762.6,743.4 766.0,742.9 769.3,742.4 772.6,741.8 775.8,741.3 779.1,740.7 782.3,740.0 785.6,739.4 788.8,738.7 791.9,738.0 795.1,737.2 798.2,736.4 801.3,735.6 804.4,734.7 807.4,733.9 810.5,733.0 813.4,732.0 816.4,731.1 819.3,730.1 822.2,729.0 825.1,728.0 827.9,726.9 830.7,725.8 833.5,724.7 836.2,723.5 838.9,722.4 841.6,721.1 844.2,719.9 846.8,718.7 849.3,717.4 851.8,716.1 854.2,714.7 856.6,713.4 859.0,712.0 861.3,710.6 863.6,709.2 865.8,707.7 868.0,706.3 870.2,704.8 872.3,703.3 874.3,701.8 876.3,700.2 878.2,698.6 880.1,697.1 882.0,695.5 883.8,693.8 885.5,692.2 887.2,690.5 888.9,688.9 890.4,687.2 892.0,685.5 893.5,683.8 894.9,682.1 896.2,680.3 897.6,678.6 898.8,676.8 900.0,675.0 901.2,673.2 902.3,671.4 903.3,669.6 904.3,667.8 905.2,666.0 906.1,664.1 906.9,662.3 907.6,660.4 908.3,658.6 908.9,656.7 909.5,654.8 910.0,652.9 910.4,651.1 910.8,649.2 941.5,245.0" fill="url(#body)"/><g clip-path="url(#cb)"><path d="M499.6 410.6A215.4 68.2 0 0 0 930.4 410.6" stroke="#020808" stroke-width="1.7" fill="none"/><path d="M503.3 458.6A211.7 79.1 0 0 0 926.7 458.6" stroke="#020808" stroke-width="1.7" fill="none"/><path d="M507.0 508.4A208.0 84.6 0 0 0 923.0 508.4" stroke="#020808" stroke-width="1.7" fill="none"/><path d="M510.7 552.0A204.3 95.2 0 0 0 919.3 552.0" stroke="#020808" stroke-width="1.7" fill="none"/><path d="M514.4 595.0A200.6 102.9 0 0 0 915.6 595.0" stroke="#020808" stroke-width="1.7" fill="none"/><path d="M492.2 304.0A222.8 51.6 0 0 0 937.8 304.0" stroke="#020808" stroke-width="4.4" fill="none"/><path d="M492.2 304.0A222.8 51.6 0 0 0 937.8 304.0" stroke="#0a5f5f" stroke-width="0.5" fill="none" stroke-dasharray="1.5 2.5"/><path d="M495.9 361.4A219.1 57.5 0 0 0 934.1 361.4" stroke="#020808" stroke-width="4.0" fill="none"/><path d="M495.9 361.4A219.1 57.5 0 0 0 934.1 361.4" stroke="#0a5f5f" stroke-width="0.7" fill="none" stroke-dasharray="none"/><path d="M545.3 273.7L549.8 338.6" stroke="#020808" stroke-width="1.5" fill="none"/><path d="M766.3 285.3L765.0 354.3" stroke="#020808" stroke-width="1.5" fill="none"/><path d="M930.0 260.5L927.0 319.9" stroke="#020808" stroke-width="1.5" fill="none"/><path d="M500.0 317.5L504.0 376.9" stroke="#020808" stroke-width="1.5" fill="none"/><path d="M646.5 353.1L648.6 416.2" stroke="#020808" stroke-width="1.5" fill="none"/><path d="M868.0 341.5L864.8 403.4" stroke="#020808" stroke-width="1.5" fill="none"/><path d="M552.9 400.1L556.5 456.8" stroke="#020808" stroke-width="1.5" fill="none"/><path d="M764.2 417.4L763.2 477.1" stroke="#020808" stroke-width="1.5" fill="none"/><path d="M921.0 381.0L919.5 432.0" stroke="#020808" stroke-width="1.5" fill="none"/><path d="M509.0 430.5L511.5 480.4" stroke="#020808" stroke-width="1.5" fill="none"/><path d="M650.0 475.6L651.6 534.1" stroke="#020808" stroke-width="1.5" fill="none"/><path d="M861.0 460.7L859.0 516.6" stroke="#020808" stroke-width="1.5" fill="none"/><path d="M560.5 512.7L563.5 566.4" stroke="#020808" stroke-width="1.5" fill="none"/><path d="M763.0 535.6L761.7 590.8" stroke="#020808" stroke-width="1.5" fill="none"/><path d="M913.2 486.4L911.0 536.7" stroke="#020808" stroke-width="1.5" fill="none"/><path d="M514.9 531.5L518.8 578.5" stroke="#020808" stroke-width="1.5" fill="none"/><path d="M652.6 589.1L654.0 642.9" stroke="#020808" stroke-width="1.5" fill="none"/><path d="M856.0 570.6L853.5 622.0" stroke="#020808" stroke-width="1.5" fill="none"/><path d="M566.5 617.4L570.0 666.1" stroke="#020808" stroke-width="1.5" fill="none"/><path d="M761.0 644.8L759.5 695.3" stroke="#020808" stroke-width="1.5" fill="none"/><path d="M904.8 587.2L903.0 630.9" stroke="#020808" stroke-width="1.5" fill="none"/><path d="M521.0 621.2L525.5 667.3" stroke="#020808" stroke-width="1.5" fill="none"/><path d="M655.6 693.3L656.8 741.7" stroke="#020808" stroke-width="1.5" fill="none"/><path d="M850.4 670.9L848.3 717.9" stroke="#020808" stroke-width="1.5" fill="none"/></g><path d="M522.4 660.4L523.1 662.3L523.9 664.1L524.8 666.0L525.7 667.8L526.7 669.6L527.7 671.4L528.8 673.2L530.0 675.0L531.2 676.8L532.4 678.6L533.8 680.3L535.1 682.1L536.5 683.8L538.0 685.5L539.6 687.2L541.1 688.9L542.8 690.5L544.5 692.2L546.2 693.8L548.0 695.5L549.9 697.1L551.8 698.6L553.7 700.2L555.7 701.8L557.7 703.3L559.8 704.8L562.0 706.3L564.2 707.7L566.4 709.2L568.7 710.6L571.0 712.0L573.4 713.4L575.8 714.7L578.2 716.1L580.7 717.4L583.2 718.7L585.8 719.9L588.4 721.1L591.1 722.4L593.8 723.5L596.5 724.7L599.3 725.8L602.1 726.9L604.9 728.0L607.8 729.0L610.7 730.1L613.6 731.1L616.5 732.0L619.5 733.0L622.6 733.9L625.6 734.7L628.7 735.6L631.8 736.4L634.9 737.2L638.1 738.0L641.2 738.7L644.4 739.4L647.7 740.0L650.9 740.7L654.2 741.3L657.4 741.8L660.7 742.4L664.0 742.9L667.4 743.4L670.7 743.8L674.1 744.2L677.4 744.6L680.8 744.9L684.2 745.3L687.6 745.5L691.0 745.8L694.4 746.0L697.8 746.2L701.3 746.3L704.7 746.5L708.1 746.5L711.6 746.6L715.0 746.6L718.4 746.6L721.9 746.5L725.3 746.5L728.7 746.3L732.2 746.2L735.6 746.0L739.0 745.8L742.4 745.5L745.8 745.3L749.2 744.9L752.6 744.6L755.9 744.2L759.3 743.8L762.6 743.4L766.0 742.9L769.3 742.4L772.6 741.8L775.8 741.3L779.1 740.7L782.3 740.0L785.6 739.4L788.8 738.7L791.9 738.0L795.1 737.2L798.2 736.4L801.3 735.6L804.4 734.7L807.4 733.9L810.5 733.0L813.4 732.0L816.4 731.1L819.3 730.1L822.2 729.0L825.1 728.0L827.9 726.9L830.7 725.8L833.5 724.7L836.2 723.5L838.9 722.4L841.6 721.1L844.2 719.9L846.8 718.7L849.3 717.4L851.8 716.1L854.2 714.7L856.6 713.4L859.0 712.0L861.3 710.6L863.6 709.2L865.8 707.7L868.0 706.3L870.2 704.8L872.3 703.3L874.3 701.8L876.3 700.2L878.2 698.6L880.1 697.1L882.0 695.5L883.8 693.8L885.5 692.2L887.2 690.5L888.9 688.9L890.4 687.2L892.0 685.5L893.5 683.8L894.9 682.1L896.2 680.3L897.6 678.6L898.8 676.8L900.0 675.0L901.2 673.2L902.3 671.4L903.3 669.6L904.3 667.8L905.2 666.0L906.1 664.1L906.9 662.3L907.6 660.4L908.3 658.6L908.9 656.7L909.5 654.8L910.0 652.9L910.4 651.1L910.8 649.2" stroke="#020606" stroke-width="2" fill="none"/><path d="M488.3 250L522.4 660.4" stroke="#020606" stroke-width="2" fill="none"/><path d="M941.2 250L910.8 649.2" stroke="#020606" stroke-width="2" fill="none"/><path d="M517.8 635.0Q517.6 630.6 519.4 630.5Q521.2 630.6 521.0 635.0Z" fill="#050505"/><path d="M519.4 632.4V638.7" stroke="#050505" stroke-width="2"/><path d="M521.4 665.6Q521.0 660.0 524.0 659.8Q527.0 660.0 526.6 665.6Z" fill="#050505"/><path d="M524.0 663.0V673.5" stroke="#050505" stroke-width="2"/><path d="M537.4 691.3Q537.0 685.7 540.0 685.5Q543.0 685.7 542.6 691.3Z" fill="#050505"/><path d="M540.0 688.7V699.2" stroke="#050505" stroke-width="2"/><path d="M568.4 715.6Q568.0 710.0 571.0 709.8Q574.0 710.0 573.6 715.6Z" fill="#050505"/><path d="M571.0 713.0V723.5" stroke="#050505" stroke-width="2"/><path d="M614.7 735.3Q614.3 729.7 617.3 729.5Q620.3 729.7 619.9 735.3Z" fill="#050505"/><path d="M617.3 732.7V743.2" stroke="#050505" stroke-width="2"/><path d="M670.6 747.6Q670.2 742.0 673.2 741.8Q676.2 742.0 675.8 747.6Z" fill="#050505"/><path d="M673.2 745.0V755.5" stroke="#050505" stroke-width="2"/><path d="M731.1 747.0Q730.7 741.4 733.7 741.2Q736.7 741.4 736.3 747.0Z" fill="#050505"/><path d="M733.7 744.4V754.9" stroke="#050505" stroke-width="2"/><path d="M789.4 738.4Q789.0 732.8 792.0 732.6Q795.0 732.8 794.6 738.4Z" fill="#050505"/><path d="M792.0 735.8V746.3" stroke="#050505" stroke-width="2"/><path d="M840.2 721.6Q839.8 716.0 842.8 715.8Q845.8 716.0 845.4 721.6Z" fill="#050505"/><path d="M842.8 719.0V729.5" stroke="#050505" stroke-width="2"/><path d="M877.6 698.9Q877.2 693.3 880.2 693.1Q883.2 693.3 882.8 698.9Z" fill="#050505"/><path d="M880.2 696.3V706.8" stroke="#050505" stroke-width="2"/><path d="M900.4 673.0Q900.0 667.4 903.0 667.2Q906.0 667.4 905.6 673.0Z" fill="#050505"/><path d="M903.0 670.4V680.9" stroke="#050505" stroke-width="2"/><path d="M909.5 645.1Q909.2 640.1 911.6 639.9Q914.0 640.1 913.7 645.1Z" fill="#050505"/><path d="M911.6 642.5V650.9" stroke="#050505" stroke-width="2"/><path d="M714.3 173.6L518.1 230.3A226.5 37.4 0 1 0 911.3 230.3Z" fill="url(#roof)" stroke="#020606" stroke-width="1.6" stroke-linejoin="round"/><path d="M488.2 248.9A226.5 37.4 0 0 0 941.2 248.9" stroke="#020606" stroke-width="3" fill="none"/><polygon points="966.2,179.9 998.9,185.9 971.6,195.3 935.7,188.4" fill="#697f95" stroke="#1e2b38" stroke-width="1.3" stroke-linejoin="round"/><polygon points="935.7,188.4 971.6,195.3 970.1,241.9 938.4,227.5" fill="#728ba3" stroke="#1e2b38" stroke-width="1.3" stroke-linejoin="round"/><polygon points="971.6,195.3 998.9,185.9 996.9,225.1 970.1,241.9" fill="#7790a9" stroke="#1e2b38" stroke-width="1.3" stroke-linejoin="round"/><path d="M966.2 179.9L967 224.5L938.4 227.5M967 224.5L996.9 225.1" stroke="#8fa6bc" stroke-width="0.6" fill="none" opacity="0.45"/><text transform="matrix(0.585 0.205 0.19 1.02 944.4 215.2)" font-family="Liberation Sans, sans-serif" font-size="13.5" fill="#1b2835" stroke="#1b2835" stroke-width="0.35">LEFT</text><text transform="matrix(0.49 -0.268 -0.05 0.99 973.3 223.4)" font-family="Liberation Sans, sans-serif" font-size="13.5" fill="#1b2835" stroke="#1b2835" stroke-width="0.35">FRONT</text><text transform="matrix(-0.7 -0.11 0.6 -0.36 976.4 184.9)" font-family="Liberation Sans, sans-serif" font-size="11.5" fill="#223140" stroke="#223140" stroke-width="0.3">TOP</text><path d="M426.4 372.2L438.5 360.6L450.6 372.2H448.2V382.6H442V373.6H435.4V382.6H428.6V372.2Z" fill="none" stroke="rgba(200,230,232,0.35)" stroke-width="4.300000000000001" stroke-linejoin="round" stroke-linecap="round"/><path d="M426.4 372.2L438.5 360.6L450.6 372.2H448.2V382.6H442V373.6H435.4V382.6H428.6V372.2Z" fill="none" stroke="#33464b" stroke-width="2.1" stroke-linejoin="round" stroke-linecap="round"/><path d="M440.4 402V396.4H427.2V409.2H432.4" fill="none" stroke="rgba(200,230,232,0.35)" stroke-width="3.6" stroke-linejoin="round" stroke-linecap="round"/><path d="M440.4 402V396.4H427.2V409.2H432.4" fill="none" stroke="#33464b" stroke-width="1.4" stroke-linejoin="round" stroke-linecap="round"/><path d="M445 407.3A6.4 6.4 0 1 1 432.2 407.3A6.4 6.4 0 1 1 445 407.3Z" fill="none" stroke="rgba(200,230,232,0.35)" stroke-width="4.2" stroke-linejoin="round" stroke-linecap="round"/><path d="M445 407.3A6.4 6.4 0 1 1 432.2 407.3A6.4 6.4 0 1 1 445 407.3Z" fill="none" stroke="#33464b" stroke-width="2.0" stroke-linejoin="round" stroke-linecap="round"/><path d="M443.4 412.2L449.6 418.4" fill="none" stroke="rgba(200,230,232,0.35)" stroke-width="5.2" stroke-linejoin="round" stroke-linecap="round"/><path d="M443.4 412.2L449.6 418.4" fill="none" stroke="#33464b" stroke-width="3.0" stroke-linejoin="round" stroke-linecap="round"/><path d="M443.8 440.8A8 8 0 1 1 427.8 440.8A8 8 0 1 1 443.8 440.8Z" fill="none" stroke="rgba(200,230,232,0.35)" stroke-width="4.4" stroke-linejoin="round" stroke-linecap="round"/><path d="M443.8 440.8A8 8 0 1 1 427.8 440.8A8 8 0 1 1 443.8 440.8Z" fill="none" stroke="#33464b" stroke-width="2.2" stroke-linejoin="round" stroke-linecap="round"/><path d="M442 447L449.4 453.2" fill="none" stroke="rgba(200,230,232,0.35)" stroke-width="5.800000000000001" stroke-linejoin="round" stroke-linecap="round"/><path d="M442 447L449.4 453.2" fill="none" stroke="#33464b" stroke-width="3.6" stroke-linejoin="round" stroke-linecap="round"/><path d="M438.8 468V490.4M427.6 479.2H450M435.6 471L438.8 467.8L442 471M435.6 487.4L438.8 490.6L442 487.4M430.6 476L427.4 479.2L430.6 482.4M447 476L450.2 479.2L447 482.4" fill="none" stroke="rgba(200,230,232,0.35)" stroke-width="4.0" stroke-linejoin="round" stroke-linecap="round"/><path d="M438.8 468V490.4M427.6 479.2H450M435.6 471L438.8 467.8L442 471M435.6 487.4L438.8 490.6L442 487.4M430.6 476L427.4 479.2L430.6 482.4M447 476L450.2 479.2L447 482.4" fill="none" stroke="#33464b" stroke-width="1.8" stroke-linejoin="round" stroke-linecap="round"/><path d="M429 504.6V511.2H435.6M430.2 518.8A10 10 0 1 0 432 508.4L429 511.2" fill="none" stroke="rgba(200,230,232,0.35)" stroke-width="4.300000000000001" stroke-linejoin="round" stroke-linecap="round"/><path d="M429 504.6V511.2H435.6M430.2 518.8A10 10 0 1 0 432 508.4L429 511.2" fill="none" stroke="#33464b" stroke-width="2.1" stroke-linejoin="round" stroke-linecap="round"/><path d="M433.6 544.6L428.6 540.2M428.6 544V540.2H432.6M444.2 544.6L449.2 540.2M449.2 544V540.2H445.2M433.6 555.8L428.6 560.2M428.6 556.4V560.2H432.6M444.2 555.8L449.2 560.2M449.2 556.4V560.2H445.2" fill="none" stroke="rgba(200,230,232,0.35)" stroke-width="4.1" stroke-linejoin="round" stroke-linecap="round"/><path d="M433.6 544.6L428.6 540.2M428.6 544V540.2H432.6M444.2 544.6L449.2 540.2M449.2 544V540.2H445.2M433.6 555.8L428.6 560.2M428.6 556.4V560.2H432.6M444.2 555.8L449.2 560.2M449.2 556.4V560.2H445.2" fill="none" stroke="#33464b" stroke-width="1.9" stroke-linejoin="round" stroke-linecap="round"/><rect x="417.6" y="163.6" width="594.6" height="600.6" fill="none" stroke="#8e9496" stroke-width="1"/></svg>
<div class="a" style="left:0px;top:783px;width:1024px;height:1px;background:#d9d9d9"></div>
<div class="t" style="left:2.0px;top:787.14px;font-size:12px;line-height:14px;color:#000;transform:scaleX(0.9312);">Units System: SI - Metric System - mm ; MPa ; N ; ºC</div>
<svg style="left:0;top:0" width="1024" height="806" viewBox="0 0 1024 806"><rect x="1019" y="792" width="2" height="2" fill="#a0a0a0"/><rect x="1015" y="796" width="2" height="2" fill="#a0a0a0"/><rect x="1019" y="796" width="2" height="2" fill="#a0a0a0"/><rect x="1011" y="800" width="2" height="2" fill="#a0a0a0"/><rect x="1015" y="800" width="2" height="2" fill="#a0a0a0"/><rect x="1019" y="800" width="2" height="2" fill="#a0a0a0"/></svg>
<div class="a" style="left:0px;top:803px;width:1024px;height:3px;background:#111"></div>
</body></html>
